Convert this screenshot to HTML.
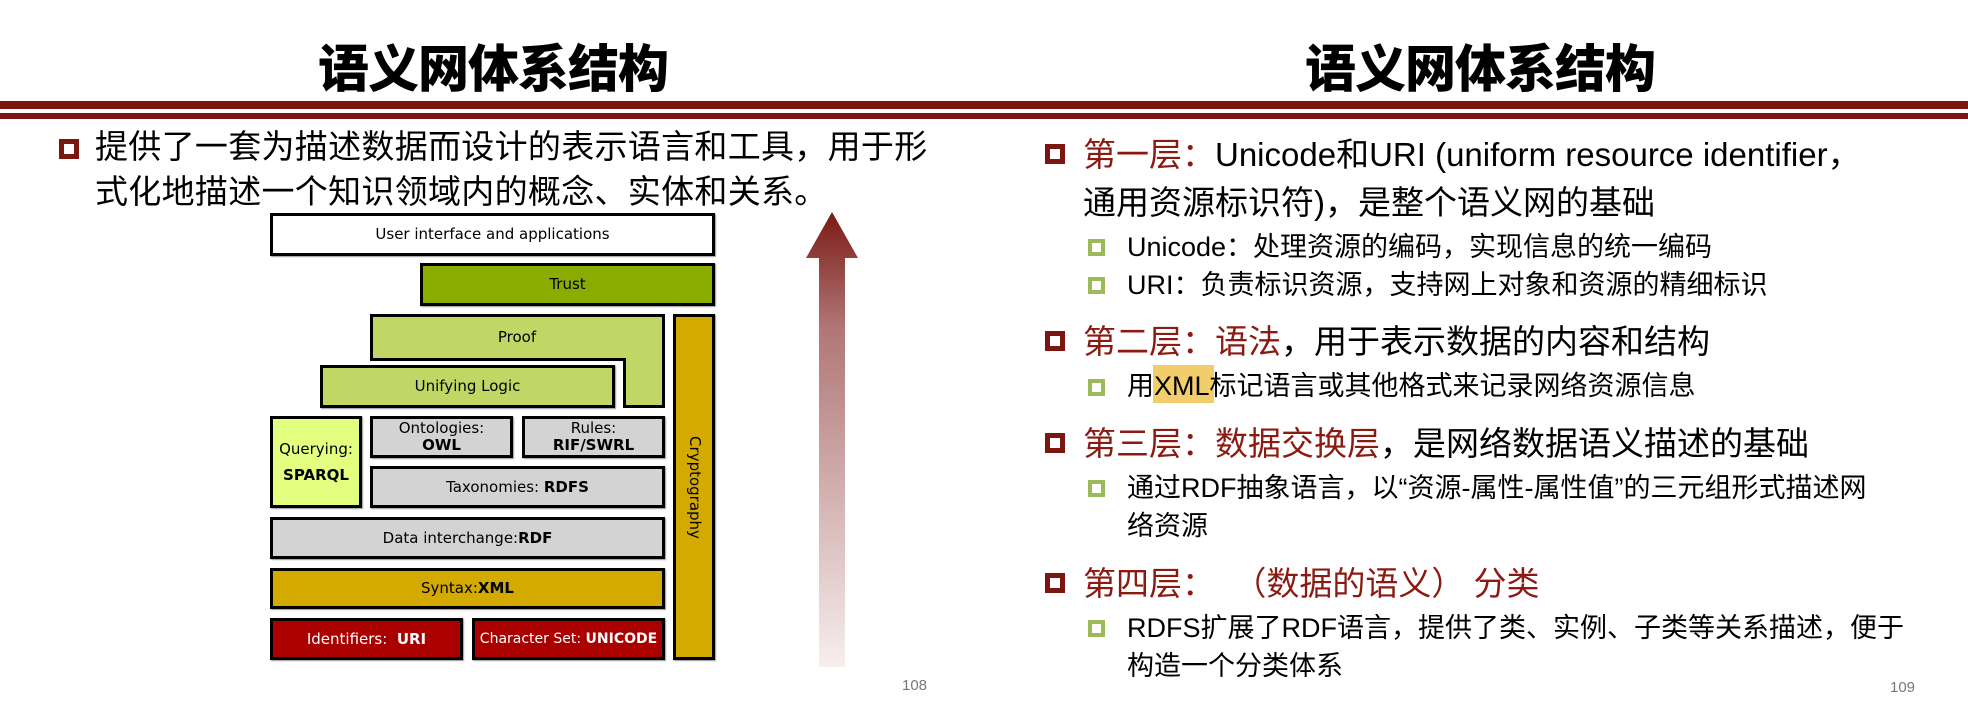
<!DOCTYPE html>
<html><head><meta charset="utf-8"><style>
*{margin:0;padding:0;box-sizing:border-box}
body{width:1968px;height:712px;background:#fff;position:relative;overflow:hidden;font-family:"Liberation Sans","Noto Sans CJK SC",sans-serif;color:#000}
.a{position:absolute;white-space:nowrap}
.title{font-family:"Noto Sans CJK SC",sans-serif;font-weight:900;font-size:51px;line-height:60px;top:35px;letter-spacing:-1px}
.band{position:absolute;left:0;width:1968px;background:#7b1610}
.sq{position:absolute;width:20px;height:20px;border:5px solid #7b1610;background:#fff}
.gs{position:absolute;width:17px;height:17px;border:4px solid #9bbb59;background:#fff}
.t34{font-size:33px;line-height:46px;letter-spacing:0.3px}
.t33{font-size:33px;line-height:48px}
.t28{font-size:27px;line-height:38px}
.red{color:#8b1a12}
.box{position:absolute;border:3px solid #000;font-family:"DejaVu Sans",sans-serif;font-size:15px;display:flex;align-items:center;justify-content:center;text-align:center;line-height:17px;box-shadow:1px 1px 1px #999}
b{font-weight:bold}
.pn{position:absolute;font-size:15px;color:#777;font-family:"Liberation Sans Narrow","Liberation Sans",sans-serif}
</style></head><body>
<div class="band" style="top:101px;height:8px"></div>
<div class="band" style="top:113px;height:6px"></div>

<div class="a title" style="left:318px">语义网体系结构</div>
<div class="a title" style="left:1305px">语义网体系结构</div>

<!-- left -->
<div class="sq" style="left:59px;top:139px"></div>
<div class="a t34" style="left:95px;top:124px">提供了一套为描述数据而设计的表示语言和工具，用于形</div>
<div class="a t34" style="left:95px;top:169px">式化地描述一个知识领域内的概念、实体和关系。</div>

<div class="box" style="left:270px;top:213px;width:445px;height:43px;background:#fff">User interface and applications</div>
<div class="box" style="left:420px;top:263px;width:295px;height:43px;background:#8aab00">Trust</div>
<svg style="position:absolute;left:0;top:0" width="1968" height="712">
<polygon points="371.5,315.5 663.5,315.5 663.5,406.5 624.5,406.5 624.5,359.5 371.5,359.5" fill="#c0d665" stroke="#000" stroke-width="3"/>
<text x="517" y="342" font-family="DejaVu Sans, sans-serif" font-size="15" text-anchor="middle">Proof</text>
</svg>
<div class="box" style="left:320px;top:365px;width:295px;height:43px;background:#c0d665">Unifying Logic</div>
<div class="box" style="left:673px;top:314px;width:42px;height:346px;background:#d4aa00"><span style="transform:rotate(90deg);display:inline-block;white-space:nowrap">Cryptography</span></div>
<div class="box" style="left:270px;top:416px;width:92px;height:92px;background:#e2ff80;line-height:26px"><span>Querying:<br><b>SPARQL</b></span></div>
<div class="box" style="left:370px;top:416px;width:143px;height:42px;background:#d3d3d3"><span>Ontologies:<br><b>OWL</b></span></div>
<div class="box" style="left:522px;top:416px;width:143px;height:42px;background:#d3d3d3"><span>Rules:<br><b>RIF/SWRL</b></span></div>
<div class="box" style="left:370px;top:466px;width:295px;height:42px;background:#d3d3d3"><span>Taxonomies: <b>RDFS</b></span></div>
<div class="box" style="left:270px;top:517px;width:395px;height:42px;background:#d3d3d3"><span>Data interchange:<b>RDF</b></span></div>
<div class="box" style="left:270px;top:568px;width:395px;height:41px;background:#d4aa00"><span>Syntax:<b>XML</b></span></div>
<div class="box" style="left:270px;top:618px;width:193px;height:42px;background:#aa0000;color:#fff"><span>Identifiers:&nbsp; <b>URI</b></span></div>
<div class="box" style="left:472px;top:618px;width:193px;height:42px;background:#aa0000;color:#fff;font-size:14px"><span>Character Set: <b>UNICODE</b></span></div>

<svg style="position:absolute;left:800px;top:208px" width="64" height="462">
<defs><linearGradient id="g" x1="0" y1="0" x2="0" y2="1"><stop offset="0" stop-color="#7b1a14"/><stop offset="0.25" stop-color="#b07575"/><stop offset="1" stop-color="#f7eeee"/></linearGradient></defs>
<path d="M32 4 L58 50 L45 50 L45 459 L19 459 L19 50 L6 50 Z" fill="url(#g)"/>
</svg>
<div class="pn" style="left:902px;top:677px">108</div>

<!-- right -->
<div class="sq" style="left:1045px;top:144px"></div>
<div class="a t33" style="left:1083px;top:131px"><span class="red">第一层：</span>Unicode和URI (uniform resource identifier，</div>
<div class="a t33" style="left:1083px;top:179px">通用资源标识符)，是整个语义网的基础</div>
<div class="gs" style="left:1088px;top:239px"></div>
<div class="a t28" style="left:1127px;top:228px">Unicode：处理资源的编码，实现信息的统一编码</div>
<div class="gs" style="left:1088px;top:277px"></div>
<div class="a t28" style="left:1127px;top:266px">URI：负责标识资源，支持网上对象和资源的精细标识</div>

<div class="sq" style="left:1045px;top:331px"></div>
<div class="a t33" style="left:1083px;top:318px"><span class="red">第二层：语法</span>，用于表示数据的内容和结构</div>
<div class="gs" style="left:1088px;top:379px"></div>
<div style="position:absolute;left:1153px;top:365px;width:61px;height:38px;background:#f2cd6b"></div>
<div class="a t28" style="left:1127px;top:367px">用XML标记语言或其他格式来记录网络资源信息</div>

<div class="sq" style="left:1045px;top:433px"></div>
<div class="a t33" style="left:1083px;top:420px"><span class="red">第三层：数据交换层</span>，是网络数据语义描述的基础</div>
<div class="gs" style="left:1088px;top:480px"></div>
<div class="a t28" style="left:1127px;top:469px">通过RDF抽象语言，以“资源-属性-属性值”的三元组形式描述网</div>
<div class="a t28" style="left:1127px;top:507px">络资源</div>

<div class="sq" style="left:1045px;top:573px"></div>
<div class="a t33" style="left:1083px;top:560px"><span class="red">第四层：&nbsp;&nbsp;（数据的语义）&nbsp;分类</span></div>
<div class="gs" style="left:1088px;top:620px"></div>
<div class="a t28" style="left:1127px;top:609px">RDFS扩展了RDF语言，提供了类、实例、子类等关系描述，便于</div>
<div class="a t28" style="left:1127px;top:647px">构造一个分类体系</div>
<div class="pn" style="left:1890px;top:679px">109</div>
</body></html>
